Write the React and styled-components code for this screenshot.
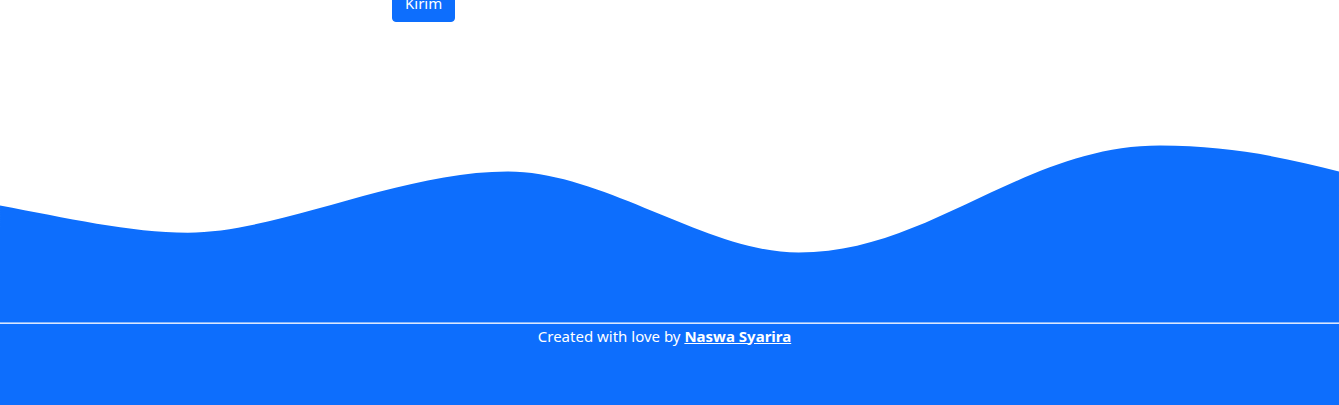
import React from "react";
import styled, { createGlobalStyle } from "styled-components";

const GlobalStyle = createGlobalStyle`
  body {
    margin: 0;
    background: #fff;
    font-family: "Noto Sans", "Open Sans", sans-serif;
    overflow: hidden;
  }
`;

const FormArea = styled.div`
  height: 22px;
  overflow: hidden;
  display: flex;
  align-items: flex-end;
  padding-left: 392px;
`;

const SubmitButton = styled.button`
  background-color: #0d6efd;
  color: #fff;
  border: 1px solid #0d6efd;
  border-radius: 4px;
  padding: 6px 12px;
  font-family: inherit;
  font-size: 15px;
  line-height: 24px;
  cursor: pointer;
`;

const Wave = styled.svg`
  display: block;
  width: 100%;
  margin-top: 3px;
`;

const Footer = styled.footer`
  background-color: #0d6efd;
  border-top: 1px solid #d9e6ff;
  color: #fff;
  text-align: center;
  padding: 0 10px 57px 0;
  p {
    margin: 0;
    font-size: 15px;
    line-height: 24px;
  }
  a {
    color: #fff;
    font-weight: bold;
  }
`;

const App = () => {
  return (
    <>
      <GlobalStyle />
      <FormArea>
        <SubmitButton type="submit">Kirim</SubmitButton>
      </FormArea>
      <Wave viewBox="0 0 1440 320" xmlns="http://www.w3.org/2000/svg">
        <path
          fill="#0d6efd"
          d="M0,194 C70,207 140,223.3 202,223.3 C300,223.3 430,157.6 546,157.6 C650,157.6 760,244.8 859,244.8 C1000,244.8 1100,129.7 1247.5,129.7 C1320,129.7 1380,142 1440,157.6 L1440,320 L0,320 Z"
        />
      </Wave>
      <Footer>
        <p>
          Created with love by <a href="#">Naswa Syarira</a>
        </p>
      </Footer>
    </>
  );
};

export default App;
